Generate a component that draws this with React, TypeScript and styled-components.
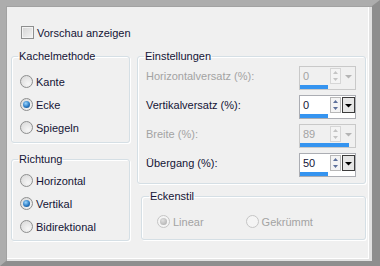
import React from "react"
import styled, { createGlobalStyle } from "styled-components"

const GlobalStyle = createGlobalStyle`
  html, body {
    margin: 0;
    padding: 0;
    background: #f0f0f0;
  }
  body {
    font-family: "Liberation Sans", Arial, sans-serif;
    font-size: 11px;
    color: #141436;
  }
`

const Frame = styled.div`
  box-sizing: border-box;
  width: 380px;
  height: 266px;
  border-style: solid;
  border-width: 6px 8px 5px 6px;
  border-color: #adadad #8e8e8e #8e8e8e #adadad;
  background: #f0f0f0;
`
const Panel = styled.div`
  box-sizing: border-box;
  height: 100%;
  padding: 20px 0 0 5px;
  box-shadow: inset 1px 1px 0 #a2a2a2, inset -3px -2px 0 #e2e2e2, inset -4px -3px 0 #fff;
`
const CheckRow = styled.label`
  display: flex;
  align-items: center;
  gap: 3px;
  margin-left: 10px;
  height: 13px;
`
const CheckBox = styled.span`
  box-sizing: border-box;
  width: 13px;
  height: 13px;
  border: 1px solid #8e8f8f;
  background: linear-gradient(135deg, #d4d4d4, #f4f4f4);
  box-shadow: inset 0 0 0 1px #f4f4f4;
`
const Columns = styled.div`
  display: flex;
  gap: 7px;
  margin-top: 11px;
`
const Column = styled.div<{ $w: number }>`
  display: flex;
  flex-direction: column;
  width: ${p => p.$w}px;
`
const Group = styled.fieldset<{ $pad: string; $ml?: number; $mt?: number }>`
  margin: ${p => p.$mt ?? 0}px 0 0 ${p => p.$ml ?? 0}px;
  padding: ${p => p.$pad};
  border: 1px solid #d5dfe5;
  border-radius: 3px;
  box-shadow: inset 1px 1px 0 #fff, 1px 1px 0 #fff;
  min-width: 0;
`
const Legend = styled.legend`
  padding: 0 1px;
  margin-left: -2px;
  line-height: 13px;
`
const RadioList = styled.div<{ $row?: boolean; $gap: number; $indent?: number }>`
  display: flex;
  flex-direction: ${p => (p.$row ? "row" : "column")};
  gap: ${p => p.$gap}px;
  margin-left: ${p => p.$indent ?? 0}px;
`
const RadioItem = styled.label<{ $disabled?: boolean }>`
  display: flex;
  align-items: center;
  gap: 3px;
  height: 13px;
  color: ${p => (p.$disabled ? "#a3a3a3" : "inherit")};
`
const RadioDot = styled.span<{ $on?: boolean; $disabled?: boolean }>`
  box-sizing: border-box;
  width: 13px;
  height: 13px;
  border-radius: 50%;
  border: 1px solid ${p => (p.$disabled ? "#c5c5c5" : "#8e8f8f")};
  background: ${p => (p.$disabled ? "#f4f4f4" : "radial-gradient(circle at 65% 70%, #f6f6f6, #d6d6d6)")};
  display: flex;
  align-items: center;
  justify-content: center;
  &::after {
    content: "";
    display: ${p => (p.$on ? "block" : "none")};
    width: 7px;
    height: 7px;
    border-radius: 50%;
    background: ${p =>
      p.$disabled
        ? "radial-gradient(circle at 40% 35%, #e0e0e0, #a8a8a8)"
        : "radial-gradient(circle at 40% 35%, #9ad6ff, #2b7bc4 55%, #0e3f78)"};
  }
`
const FieldRow = styled.div`
  display: flex;
  align-items: flex-start;
  justify-content: space-between;
`
const FieldLabel = styled.span<{ $disabled?: boolean }>`
  line-height: 18px;
  padding-top: 1px;
  color: ${p => (p.$disabled ? "#a3a3a3" : "inherit")};
`
const Spin = styled.div<{ $disabled?: boolean }>`
  display: flex;
  flex-direction: column;
  width: 55px;
  border: 1px solid ${p => (p.$disabled ? "#c9c9c9" : "#abadb3")};
  background: ${p => (p.$disabled ? "#f0f0f0" : "#fff")};
`
const SpinTop = styled.div`
  display: flex;
  height: 18px;
`
const SpinValue = styled.div<{ $disabled?: boolean }>`
  width: 30px;
  box-sizing: border-box;
  padding-left: 3px;
  line-height: 18px;
  color: ${p => (p.$disabled ? "#a3a3a3" : "#141436")};
`
const Steppers = styled.div<{ $disabled?: boolean }>`
  box-sizing: border-box;
  width: 11px;
  height: 16px;
  margin: 1px 1px 0 0;
  display: flex;
  flex-direction: column;
  border: 1px solid ${p => (p.$disabled ? "#d6d6d6" : "#b8b8b8")};
  background: #f4f4f4;
  svg {
    flex: 1;
  }
`
const DropBtn = styled.div<{ $disabled?: boolean }>`
  box-sizing: border-box;
  width: 13px;
  height: 16px;
  margin-top: 1px;
  display: flex;
  align-items: center;
  justify-content: center;
  border: 1px solid ${p => (p.$disabled ? "transparent" : "#3c3c3c")};
  background: ${p => (p.$disabled ? "transparent" : "#e6e6e6")};
`
const Track = styled.div`
  height: 4px;
`
const Fill = styled.div`
  height: 100%;
  background: #3594f0;
`

type Field = { label: string; value: number; min: number; max: number; disabled?: boolean }

const fields: Field[] = [
  { label: "Horizontalversatz (%):", value: 0, min: -100, max: 100, disabled: true },
  { label: "Vertikalversatz (%):", value: 0, min: -100, max: 100 },
  { label: "Breite (%):", value: 89, min: 0, max: 100, disabled: true },
  { label: "Übergang (%):", value: 50, min: 0, max: 100 },
]

function Spinner({ f }: { f: Field }) {
  const arrow = f.disabled ? "#c4c4c4" : "#5c6f9a"
  const pct = ((f.value - f.min) / (f.max - f.min)) * 100
  return (
    <Spin $disabled={f.disabled}>
      <SpinTop>
        <SpinValue $disabled={f.disabled}>{f.value}</SpinValue>
        <Steppers $disabled={f.disabled}>
          <svg viewBox="0 0 9 7" width="9" height="7">
            <path d="M2 5h5L4.5 2z" fill={arrow} />
          </svg>
          <svg viewBox="0 0 9 7" width="9" height="7">
            <path d="M2 2h5L4.5 5z" fill={arrow} />
          </svg>
        </Steppers>
        <DropBtn $disabled={f.disabled}>
          <svg viewBox="0 0 9 5" width="9" height="5">
            <path d="M1 1h7L4.5 4.5z" fill={f.disabled ? "#b4b4b4" : "#000"} />
          </svg>
        </DropBtn>
      </SpinTop>
      <Track>
        <Fill style={{ width: `${pct}%` }} />
      </Track>
    </Spin>
  )
}

function Radio({ label, on, disabled }: { label: string; on?: boolean; disabled?: boolean }) {
  return (
    <RadioItem $disabled={disabled}>
      <RadioDot $on={on} $disabled={disabled} />
      {label}
    </RadioItem>
  )
}

export default function App() {
  return (
    <>
      <GlobalStyle />
      <Frame>
        <Panel>
          <CheckRow>
            <CheckBox />
            Vorschau anzeigen
          </CheckRow>
          <Columns>
            <Column $w={119}>
              <Group $pad="12px 0 8px 8px">
                <Legend>Kachelmethode</Legend>
                <RadioList $gap={10}>
                  <Radio label="Kante" />
                  <Radio label="Ecke" on />
                  <Radio label="Spiegeln" />
                </RadioList>
              </Group>
              <Group $pad="8px 0 7px 8px" $mt={10}>
                <Legend>Richtung</Legend>
                <RadioList $gap={10}>
                  <Radio label="Horizontal" />
                  <Radio label="Vertikal" on />
                  <Radio label="Bidirektional" />
                </RadioList>
              </Group>
            </Column>
            <Column $w={229}>
              <Group $pad="3px 9px 6px 8px">
                <Legend>Einstellungen</Legend>
                <RadioList $gap={5}>
                  {fields.map(f => (
                    <FieldRow key={f.label}>
                      <FieldLabel $disabled={f.disabled}>{f.label}</FieldLabel>
                      <Spinner f={f} />
                    </FieldRow>
                  ))}
                </RadioList>
              </Group>
              <Group $pad="12px 0 11px 9px" $ml={4} $mt={6}>
                <Legend>Eckenstil</Legend>
                <RadioList $row $gap={42} $indent={6}>
                  <Radio label="Linear" on disabled />
                  <Radio label="Gekrümmt" disabled />
                </RadioList>
              </Group>
            </Column>
          </Columns>
        </Panel>
      </Frame>
    </>
  )
}
